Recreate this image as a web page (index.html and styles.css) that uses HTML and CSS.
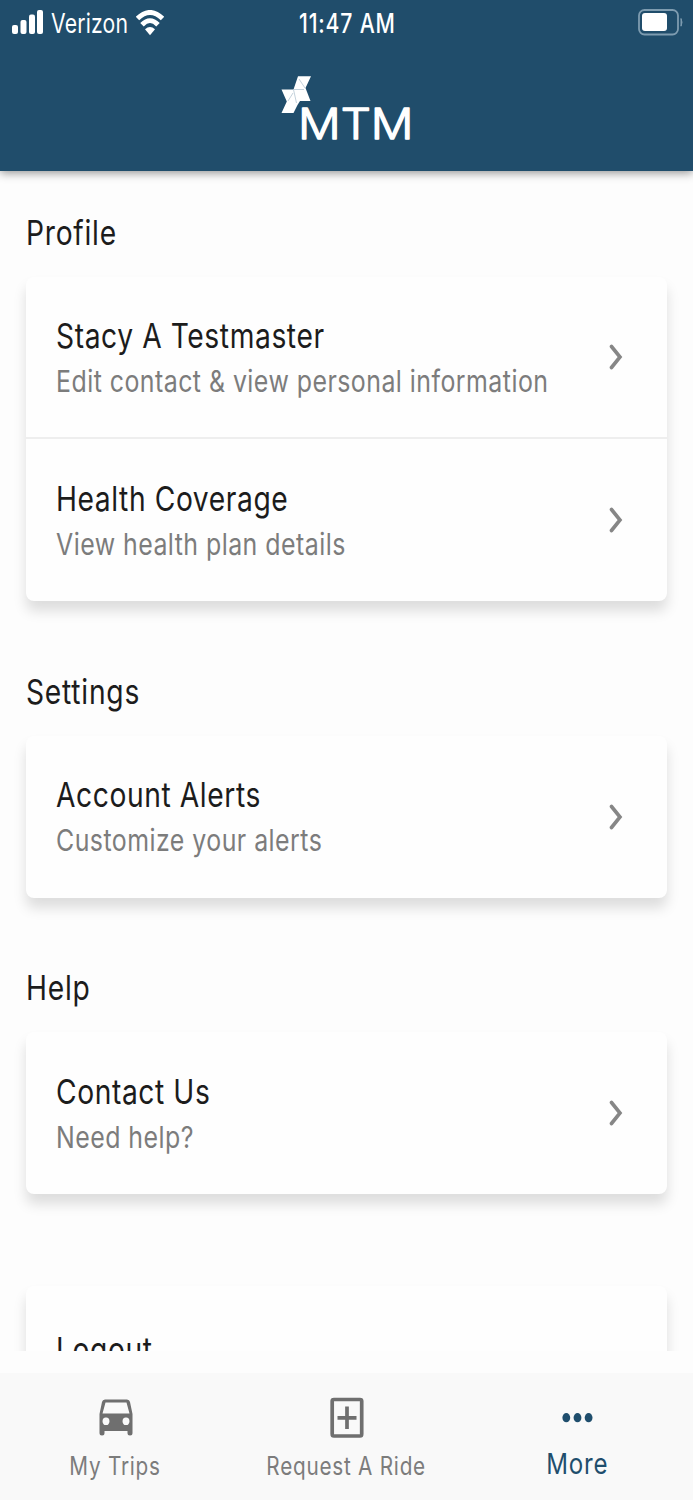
FILE: index.html
```
<!DOCTYPE html>
<html lang="en">
<head>
<meta charset="utf-8">
<title>More</title>
<link rel="stylesheet" href="styles.css">
</head>
<body>
<header class="header">
  <div class="status">
    <div class="carrier">
      <svg class="signal" width="32" height="26" viewBox="0 0 32 26"><g fill="#fff"><rect x="0" y="15" width="6" height="9" rx="2"/><rect x="8.500" y="10" width="6" height="14" rx="2"/><rect x="17" y="4.500" width="6" height="19.500" rx="2"/><rect x="25" y="0" width="6" height="24" rx="2"/></g></svg>
      <span class="carrier-name"><span class="squeeze carrier-text">Verizon</span></span>
      <svg class="wifi" width="28" height="26" viewBox="0 0 28 26"><g fill="none" stroke="#fff" stroke-width="4.900"><path d="M1.500 8.500Q14-3.500 26.500 8.500"/><path d="M6 14.700Q14 6.500 22 14.700"/></g><path d="M9 19.200Q14 14.800 19 19.200L14 25.200Z" fill="#fff"/></svg>
    </div>
    <div class="clock"><span class="squeeze clock-text">11:47 AM</span></div>
    <svg class="battery" width="45" height="28" viewBox="0 0 45 28"><rect x="1" y="1" width="39" height="24.500" rx="5.500" fill="none" stroke="#7e9cb0" stroke-width="1.800"/><rect x="4" y="4" width="25" height="18" rx="3" fill="#fff"/><path d="M43 9.500Q45 13.300 43 17.200Z" fill="#7e9cb0" stroke="#7e9cb0"/></svg>
  </div>
  <svg class="logo" width="134" height="68" viewBox="0 0 134 68">
    <path fill="#fff" d="M18 .3H31L25.500 12 30.500 25H20L17.500 29 13.500 37H1.500L6.800 25.500 1.500 13.500H13.500Z"/>
    <path d="M13.500 13.500 16.500 27M19 3 25 12M8 25 13 17M14 13.500H24" fill="none" stroke="#a9bdcb" stroke-width=".7"/>
    <text class="logo-text" x="18" y="62.500" textLength="115.500" lengthAdjust="spacingAndGlyphs">MTM</text>
  </svg>
</header>
<main class="content">
  <section class="section">
    <h2 class="heading"><span class="squeeze">Profile</span></h2>
    <div class="card">
      <a class="row"><div class="copy"><div class="title"><span class="squeeze">Stacy A Testmaster</span></div><div class="detail"><span class="squeeze">Edit contact &amp; view personal information</span></div></div><svg class="chevron" width="14" height="28" viewBox="0 0 14 28"><path d="M2.500 3.500 11 14 2.500 24.500"/></svg></a>
      <a class="row"><div class="copy"><div class="title"><span class="squeeze">Health Coverage</span></div><div class="detail"><span class="squeeze">View health plan details</span></div></div><svg class="chevron" width="14" height="28" viewBox="0 0 14 28"><path d="M2.500 3.500 11 14 2.500 24.500"/></svg></a>
    </div>
  </section>
  <section class="section">
    <h2 class="heading"><span class="squeeze">Settings</span></h2>
    <div class="card">
      <a class="row"><div class="copy"><div class="title"><span class="squeeze">Account Alerts</span></div><div class="detail"><span class="squeeze">Customize your alerts</span></div></div><svg class="chevron" width="14" height="28" viewBox="0 0 14 28"><path d="M2.500 3.500 11 14 2.500 24.500"/></svg></a>
    </div>
  </section>
  <section class="section">
    <h2 class="heading"><span class="squeeze">Help</span></h2>
    <div class="card">
      <a class="row"><div class="copy"><div class="title"><span class="squeeze">Contact Us</span></div><div class="detail"><span class="squeeze">Need help?</span></div></div><svg class="chevron" width="14" height="28" viewBox="0 0 14 28"><path d="M2.500 3.500 11 14 2.500 24.500"/></svg></a>
    </div>
  </section>
  <section class="section account">
    <div class="card"><a class="row logout"><div class="title"><span class="squeeze">Logout</span></div></a></div>
  </section>
</main>
<nav class="tabs">
  <a class="tab">
    <svg width="36" height="44" viewBox="0 0 36 44"><path fill="#6f6f6f" fill-rule="evenodd" d="M7 3.500H29Q31.500 3.500 32 6L34.500 18V37Q34.500 39.500 32 39.500T29.500 37V35H6.500V37Q6.500 39.500 4 39.500T1.500 37V18L4 6Q4.500 3.500 7 3.500ZM7.500 6.500 4.500 17.500H31.500L28.500 6.500ZM8 21.500A3 3.800 0 1 0 8 29A3 3.800 0 1 0 8 21.500ZM28 21.500A3 3.800 0 1 0 28 29A3 3.800 0 1 0 28 21.500Z"/></svg>
    <span class="label"><span class="squeeze">My Trips</span></span>
  </a>
  <a class="tab">
    <svg width="36" height="44" viewBox="0 0 36 44"><path fill="none" stroke="#6f6f6f" stroke-width="3.700" d="M5 3.500H31Q32.700 3.500 32.700 5V38Q32.700 40 31 40H5Q3.200 40 3.200 38V5Q3.200 3.500 5 3.500ZM18 10.500V33M8.500 21.800H27.500"/></svg>
    <span class="label"><span class="squeeze">Request A Ride</span></span>
  </a>
  <a class="tab active">
    <svg width="36" height="44" viewBox="0 0 36 44"><g fill="#1f4e6d"><ellipse cx="6.300" cy="21.700" rx="3.900" ry="4.600"/><ellipse cx="17.500" cy="21.700" rx="3.900" ry="4.600"/><ellipse cx="28.600" cy="21.700" rx="3.900" ry="4.600"/></g></svg>
    <span class="label"><span class="squeeze">More</span></span>
  </a>
</nav>
</body>
</html>
```
FILE: styles.css
```
* { box-sizing: border-box; }
body { margin: 0; height: 1500px; display: flex; flex-direction: column; overflow: hidden; background: #fdfdfd; color: #1c1c1c; font-family: Inter, "Liberation Sans", sans-serif; font-weight: 400; }
.squeeze { display: inline-block; transform: scaleX(.83); transform-origin: left; white-space: nowrap; }
.header { position: relative; z-index: 1; height: 171px; flex: none; background: #204d6b; color: #fff; box-shadow: 0 2px 9px rgba(0,0,0,.42); display: flex; flex-direction: column; align-items: center; }
.status { width: 100%; height: 46px; padding: 0 10px 0 12px; display: grid; grid-template-columns: 1fr 98px 1fr; align-items: center; font-size: 26.500px; }
.carrier { display: flex; align-items: center; }
.carrier-name { width: 78px; margin: 0 7px; letter-spacing: .2px; }
.carrier-text, .clock-text { transform: scaleX(.8); }
.clock { font-weight: 550; letter-spacing: 1.050px; white-space: nowrap; }
.battery { justify-self: end; }
.logo { margin-top: 30px; overflow: visible; }
.logo-text { font-family: Inter, sans-serif; font-weight: 300; font-size: 42px; fill: #fff; stroke: #fff; stroke-width: 1.300; stroke-linejoin: round; }
.content { height: 1180px; flex: none; overflow: hidden; padding: 36px 26px 0; }
.section { margin-bottom: 64.700px; }
.heading { margin: 0; height: 70px; padding-top: 5px; font-size: 34px; font-weight: 400; line-height: 42px; letter-spacing: .900px; }
.card { background: #fefefe; border-radius: 8px; box-shadow: 0 10px 13px rgba(0,0,0,.13); }
.row { height: 162px; padding: 0 44px 0 30px; display: flex; align-items: center; justify-content: space-between; }
.row:not(:last-child) { border-bottom: 2px solid #eee; }
.copy { flex: 1; min-width: 0; padding-top: 1px; }
.row:not(:last-child) .copy { padding-top: 2.500px; }
.title { font-size: 34px; line-height: 46px; letter-spacing: .700px; }
.detail { font-size: 30px; line-height: 44px; color: #7c7c7c; letter-spacing: .560px; white-space: nowrap; }
.chevron { flex: none; fill: none; stroke: #868686; stroke-width: 3.600; stroke-linecap: round; }
.account { margin-top: 92px; }
.logout { height: 124px; padding-top: 3px; }
.tabs { margin-top: 22px; height: 127px; flex: none; display: grid; grid-template-columns: repeat(3, 1fr); background: #f9f9f9; color: #7c7c7c; }
.tab { padding-top: 23px; display: flex; flex-direction: column; align-items: center; gap: 8px; }
.label { font-size: 25px; line-height: 36px; letter-spacing: .900px; }
.label .squeeze { transform-origin: center; }
.active { color: #1f4e6d; }
.active .label { font-size: 29px; line-height: 32px; }
```
